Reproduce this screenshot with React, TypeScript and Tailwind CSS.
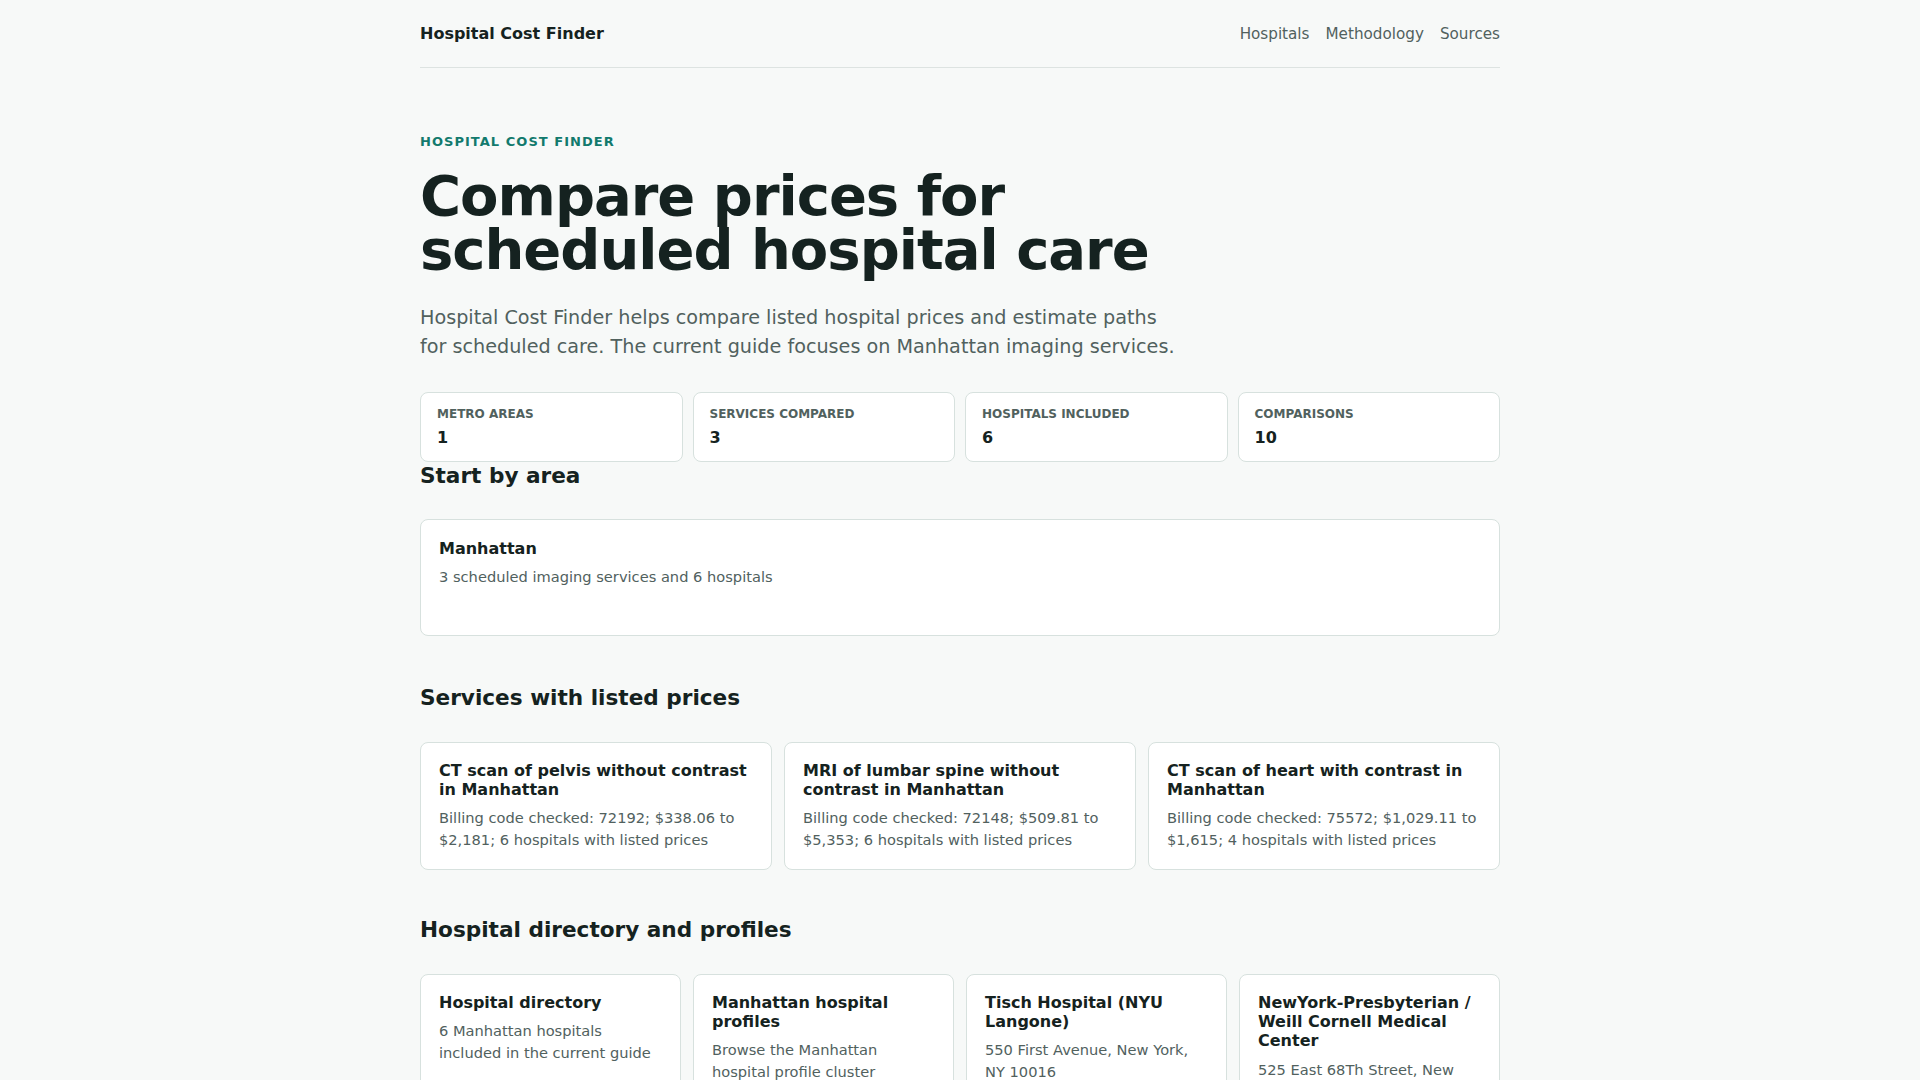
const stats = [
  { label: 'Metro areas', value: '1' },
  { label: 'Services compared', value: '3' },
  { label: 'Hospitals included', value: '6' },
  { label: 'Comparisons', value: '10' },
]

const services = [
  {
    title: 'CT scan of pelvis without contrast in Manhattan',
    text: 'Billing code checked: 72192; $338.06 to $2,181; 6 hospitals with listed prices',
  },
  {
    title: 'MRI of lumbar spine without contrast in Manhattan',
    text: 'Billing code checked: 72148; $509.81 to $5,353; 6 hospitals with listed prices',
  },
  {
    title: 'CT scan of heart with contrast in Manhattan',
    text: 'Billing code checked: 75572; $1,029.11 to $1,615; 4 hospitals with listed prices',
  },
]

const hospitals = [
  { title: 'Hospital directory', text: '6 Manhattan hospitals included in the current guide' },
  { title: 'Manhattan hospital profiles', text: 'Browse the Manhattan hospital profile cluster' },
  { title: 'Tisch Hospital (NYU Langone)', text: '550 First Avenue, New York, NY 10016' },
  {
    title: 'NewYork-Presbyterian / Weill Cornell Medical Center',
    text: '525 East 68Th Street, New York, NY 10065',
  },
  { title: 'Mount Sinai Hospital', text: '1 Gustave L. Levy Place, New York, NY 10029' },
  { title: 'Lenox Hill Hospital', text: '100 East 77Th Street, New York, NY 10075' },
  { title: 'Mount Sinai Morningside', text: '1111 Amsterdam Avenue, New York, NY 10025' },
  { title: 'Bellevue Hospital Center', text: '462 First Avenue, New York, NY 10016' },
]

function Card({ title, text, className = '' }: { title: string; text: string; className?: string }) {
  return (
    <a
      href="#"
      className={`block rounded-lg border border-[#d7e1de] bg-white p-[18px] ${className}`}
    >
      <h3 className="text-base font-bold leading-[1.2] text-[#152220]">{title}</h3>
      <p className="mt-2 text-[14.64px] leading-[1.5] text-[#51615e]">{text}</p>
    </a>
  )
}

export default function App() {
  return (
    <div className="min-h-screen bg-[#f7f9f8] font-['DejaVu_Sans',sans-serif] text-[#152220]">
      <div className="mx-auto max-w-[1080px]">
        {/* Top bar */}
        <header className="flex h-[68px] items-center justify-between border-b border-[#dde3e1] pt-px">
          <a href="#" className="text-base font-bold leading-6 text-[#152220]">
            Hospital Cost Finder
          </a>
          <nav className="flex items-center gap-4 text-[15.2px] leading-6 text-[#51615e]">
            <a href="#">Hospitals</a>
            <a href="#">Methodology</a>
            <a href="#">Sources</a>
          </nav>
        </header>

        <main className="pt-16 pb-24">
          {/* Hero */}
          <section>
            <p className="text-[13px] font-bold uppercase leading-5 tracking-[0.08em] text-[#127a6d]">
              Hospital Cost Finder
            </p>
            <h1 className="mt-[17px] text-[56px] font-bold leading-[54px] tracking-[-0.018em] text-[#152220]">
              Compare prices for
              <br />
              scheduled hospital care
            </h1>
            <p className="mt-[26px] max-w-[760px] text-[19.2px] leading-[29.4px] text-[#51615e]">
              Hospital Cost Finder helps compare listed hospital prices and estimate paths for
              scheduled care. The current guide focuses on Manhattan imaging services.
            </p>

            <div className="mt-[30px] grid grid-cols-4 gap-[10px]">
              {stats.map((s) => (
                <div
                  key={s.label}
                  className="rounded-lg border border-[#d7e1de] bg-white px-4 pt-[13px] pb-[11px]"
                >
                  <div className="text-xs font-bold uppercase leading-4 text-[#51615e]">{s.label}</div>
                  <div className="mt-1 text-base font-bold leading-6 text-[#152220]">{s.value}</div>
                </div>
              ))}
            </div>
          </section>

          {/* Areas */}
          <section>
            <h2 className="mb-[30px] text-[21.6px] font-bold leading-[27px]">Start by area</h2>
            <Card
              title="Manhattan"
              text="3 scheduled imaging services and 6 hospitals"
              className="min-h-[117px] pt-[19px]"
            />
          </section>

          {/* Services */}
          <section className="mt-[48px]">
            <h2 className="mb-[30px] text-[21.6px] font-bold leading-7">Services with listed prices</h2>
            <div className="grid grid-cols-3 gap-3">
              {services.map((s) => (
                <Card key={s.title} title={s.title} text={s.text} />
              ))}
            </div>
          </section>

          {/* Hospitals */}
          <section className="mt-[46px]">
            <h2 className="mb-[30px] text-[21.6px] font-bold leading-7">Hospital directory and profiles</h2>
            <div className="grid grid-cols-4 gap-3">
              {hospitals.map((h) => (
                <Card key={h.title} title={h.title} text={h.text} />
              ))}
            </div>
          </section>
        </main>
      </div>
    </div>
  )
}
